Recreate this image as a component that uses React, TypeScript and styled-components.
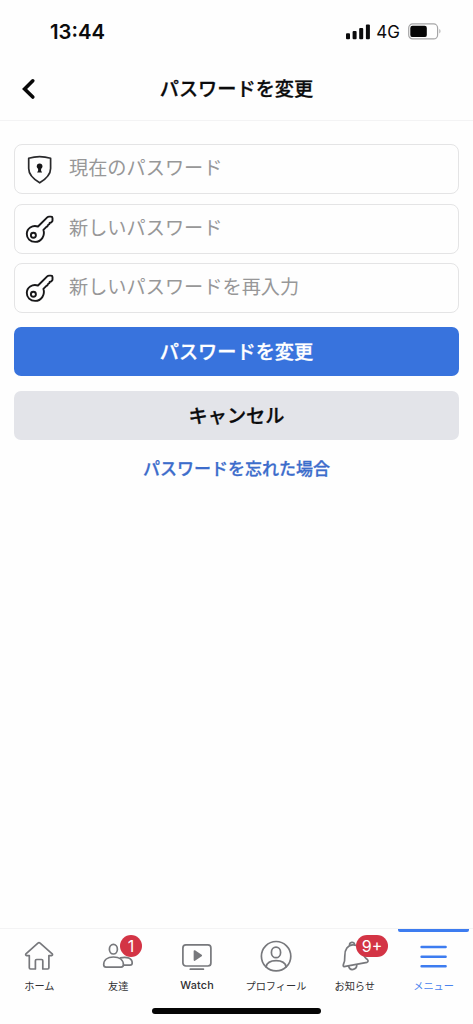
import React from 'react';
import styled, { createGlobalStyle } from 'styled-components';

const GlobalStyle = createGlobalStyle`
  * { box-sizing: border-box; }
  body {
    margin: 0;
    background: #fefefe;
    font-family: Inter, "Noto Sans CJK JP", sans-serif;
    color: #0b0b0c;
  }
`;

const Screen = styled.div`
  display: flex;
  flex-direction: column;
  width: 100%;
  height: 1024px;
  overflow: hidden;
`;

const StatusBar = styled.div`
  display: flex;
  align-items: center;
  justify-content: space-between;
  height: 56px;
  padding: 7px 31px 0 50px;
`;

const Clock = styled.div`
  font-size: 20.3px;
  font-weight: 600;
  line-height: 24px;
`;

const StatusIcons = styled.div`
  display: flex;
  align-items: center;
`;

const Network = styled.span`
  margin: 1px 8px 0 5.4px;
  font-size: 17px;
  line-height: 20px;
  font-weight: 400;
`;

const Header = styled.header`
  display: grid;
  grid-template-columns: 60px 1fr 60px;
  align-items: center;
  height: 65px;
  border-bottom: 1px solid #f3f3f4;
`;

const BackButton = styled.button`
  display: flex;
  padding: 1px 0 0 20px;
  border: 0;
  background: none;
`;

const Title = styled.h1`
  margin: 2px 0 0;
  text-align: center;
  font-size: 19.2px;
  font-weight: 500;
  line-height: 28px;
  -webkit-text-stroke: 0.3px currentColor;
`;

const Form = styled.main`
  flex: 1;
  display: flex;
  flex-direction: column;
  padding: 23px 14px 0;
`;

const Fields = styled.div`
  display: flex;
  flex-direction: column;
  gap: 9.3px;
  margin-bottom: 13.8px;
`;

const Field = styled.label`
  display: flex;
  align-items: center;
  height: 50.3px;
  padding-left: 9px;
  border: 1px solid #e4e4e5;
  border-radius: 8px;
`;

const Hint = styled.span`
  margin: -2px 0 0 13px;
  color: #979798;
  font-size: 19.2px;
  font-weight: 400;
  line-height: 28px;
`;

const Button = styled.button<{ $primary?: boolean }>`
  height: 49px;
  margin-bottom: 14.4px;
  padding: 1px 0 0;
  border: 0;
  border-radius: 7px;
  background: ${(p) => (p.$primary ? '#3873dd' : '#e3e4e9')};
  color: ${(p) => (p.$primary ? '#fff' : '#0b0b0c')};
  font-family: inherit;
  font-size: 19.2px;
  font-weight: 500;
  line-height: 28px;
  -webkit-text-stroke: 0.3px currentColor;
`;

const ForgotLink = styled.a`
  align-self: center;
  margin-top: 3px;
  color: #3c6ccb;
  font-size: 17px;
  font-weight: 500;
  line-height: 24px;
  -webkit-text-stroke: 0.3px currentColor;
`;

const TabBar = styled.nav`
  display: grid;
  grid-template-columns: repeat(6, 1fr);
  height: 72px;
  border-top: 1px solid #f3f3f4;
`;

const Tab = styled.div<{ $active?: boolean }>`
  position: relative;
  display: flex;
  flex-direction: column;
  align-items: center;
  padding-top: 9.4px;
  color: ${(p) => (p.$active ? '#3d7cf0' : '#77787c')};

  &::before {
    content: '';
    display: ${(p) => (p.$active ? 'block' : 'none')};
    position: absolute;
    top: 0;
    left: 4px;
    width: 71px;
    height: 3px;
    border-radius: 0 0 2px 2px;
    background: #3d7cf0;
  }
`;

const TabLabel = styled.span<{ $active?: boolean; $latin?: boolean }>`
  margin-top: 5.6px;
  color: ${(p) => (p.$active ? '#4a84ee' : '#303033')};
  font-size: ${(p) => (p.$latin ? '10.8px' : '10.2px')};
  font-weight: ${(p) => (p.$latin ? 500 : 400)};
  letter-spacing: ${(p) => (p.$latin ? '0.15px' : 'normal')};
  line-height: 16px;
  white-space: nowrap;
`;

const Badge = styled.span<{ $wide?: boolean }>`
  position: absolute;
  top: 6px;
  left: ${(p) => (p.$wide ? '41px' : '41.2px')};
  width: ${(p) => (p.$wide ? '31.5px' : '22px')};
  height: 22px;
  border-radius: 11px;
  background: #d33445;
  color: #fff;
  text-align: center;
  font-size: 16px;
  line-height: 22px;
`;

const HomeArea = styled.div`
  display: flex;
  justify-content: center;
  height: 24px;
  padding-top: 8px;
`;

const HomeIndicator = styled.div`
  width: 169px;
  height: 6px;
  border-radius: 3px;
  background: #050505;
`;

const SignalIcon = () => (
  <svg width="25" height="16" viewBox="0 0 25 16" fill="#0b0b0c">
    <rect x="0" y="9.3" width="4" height="6" rx="1" />
    <rect x="6.6" y="7" width="4" height="8.3" rx="1" />
    <rect x="13.2" y="4" width="4" height="11.3" rx="1" />
    <rect x="19.9" y="0.5" width="4" height="14.8" rx="1" />
  </svg>
);

const BatteryIcon = () => (
  <svg width="34" height="17" viewBox="0 0 34 17" fill="none">
    <rect x="0.7" y="0.9" width="28.9" height="15" rx="4" stroke="#a5a5a6" strokeWidth="1.2" />
    <rect x="2.3" y="2.7" width="16.5" height="11.4" rx="2.2" fill="#050505" />
    <path d="M31.4 6v4.4c1.4-.6 1.4-3.8 0-4.4z" fill="#a5a5a6" />
  </svg>
);

const BackIcon = () => (
  <svg width="18" height="22" viewBox="0 0 18 22" fill="none">
    <path d="M12.8 2.8 4.6 11l8.2 8" stroke="#080808" strokeWidth="3.6" strokeLinecap="round" strokeLinejoin="miter" />
  </svg>
);

const ShieldIcon = () => (
  <svg width="32" height="32" viewBox="0 0 32 32" fill="none" stroke="#29292b" strokeWidth="1.7" strokeLinejoin="round">
    <path d="M4.7 5.2C12 3.1 19.3 3.1 26.6 5.2V15.5C26.6 22.4 21 26.6 15.7 29.8 10.3 26.6 4.7 22.4 4.7 15.5Z" />
    <circle cx="15.6" cy="13.2" r="2.8" fill="#171719" stroke="none" />
    <path d="M14.1 14.5h3v3.2l1 1.9h-5l1-1.9z" fill="#171719" stroke="none" />
  </svg>
);

const KeyIcon = () => (
  <svg width="32" height="32" viewBox="0 0 32 32" fill="none" stroke="#171719" strokeWidth="1.9" strokeLinejoin="round">
    <path d="M14 13.5 23.2 4.4Q24 3.6 25 3.6H27.1Q28.5 3.6 28.5 5V7.5Q28.5 8.1 28 8.6L27.3 9.3Q26.8 9.8 26 9.7 25.5 9.7 25.5 10.4 25.6 11.4 24.6 11.6 23.8 11.8 23.7 12.7 23.5 13.6 22.4 13.8L19.4 16.8C21.3 22.8 17.3 28.9 11.1 28.9 6.2 28.9 2.8 25.3 2.8 20.9 2.8 15.4 8.2 11.7 14 13.5Z" />
    <circle cx="9.4" cy="22.2" r="2.5" />
  </svg>
);

const TabIcon = styled.svg.attrs({
  width: 34,
  height: 34,
  viewBox: '0 0 34 34',
  fill: 'none',
  stroke: 'currentColor',
  strokeLinecap: 'round',
  strokeLinejoin: 'round',
})<{ $weight?: number }>`
  flex: none;
  stroke-width: ${(p) => p.$weight ?? 1.7};
`;

const HomeIcon = () => (
  <TabIcon>
    <path d="M15.9 5.1Q17 4.2 18.1 5.1L30.2 15.8Q31.1 17.3 29.5 17.6H26.9V29.8Q26.9 31 25.7 31H20.8V22.7Q20.8 21.5 19.6 21.5H14.6Q13.4 21.5 13.4 22.7V31H8.5Q7.3 31 7.3 29.8V17.6H4.7Q3.1 17.3 3.9 15.8Z" />
  </TabIcon>
);

const FriendsIcon = () => (
  <TabIcon>
    <ellipse cx="12.4" cy="11.2" rx="4" ry="4.8" />
    <path d="M5 29.1Q2.7 29.1 2.7 26.8C2.7 22 6.4 19 12.4 19S22.4 22 22.4 26.8Q22.4 29.1 20.1 29.1Z" />
    <path d="M19.4 19.9C25.9 18.3 31.2 20.3 31.2 25Q31.2 27.2 29 27.2H22.7" />
  </TabIcon>
);

const WatchIcon = () => (
  <TabIcon>
    <rect x="2.9" y="6.9" width="28" height="21.1" rx="3" />
    <path d="m14.5 13 6.7 4.5-6.7 4.5z" fill="currentColor" />
    <path d="M10.3 31.2H23.4" />
  </TabIcon>
);

const ProfileIcon = () => (
  <TabIcon>
    <circle cx="17.1" cy="18.2" r="14.7" />
    <ellipse cx="17" cy="14.4" rx="4.6" ry="5.3" />
    <path d="M7.1 28.9C7.9 24.6 11.5 22.7 17.1 22.7S26.3 24.6 27.1 28.9" />
  </TabIcon>
);

const BellIcon = () => (
  <TabIcon>
    <path d="M11.6 7.3C11.2 3.8 16.3 3.2 16.6 6.5" />
    <path d="M6.1 28.7Q4.8 28.3 5.4 26.5C6.6 24.2 7 22.6 6.8 18C6.5 11.4 10 7.2 14.8 6.8 20.3 6.5 22.3 10.6 24.3 14.8 26.4 18.7 27.6 20.3 29.4 21.5Q30.9 23.3 29 24.3Z" />
    <path d="M10.7 28.5C12 33.3 18.8 32 18.8 26.8" />
  </TabIcon>
);

const MenuIcon = () => (
  <TabIcon $weight={2.5}>
    <path d="M4.6 9H28.6M4.6 18.7H28.6M4.6 28.3H28.6" />
  </TabIcon>
);

type TabItem = {
  label: string;
  icon: React.ReactNode;
  badge?: string;
  active?: boolean;
  latin?: boolean;
};

const tabs: TabItem[] = [
  { label: 'ホーム', icon: <HomeIcon /> },
  { label: '友達', icon: <FriendsIcon />, badge: '1' },
  { label: 'Watch', icon: <WatchIcon />, latin: true },
  { label: 'プロフィール', icon: <ProfileIcon /> },
  { label: 'お知らせ', icon: <BellIcon />, badge: '9+' },
  { label: 'メニュー', icon: <MenuIcon />, active: true },
];

export default function App() {
  return (
    <>
      <GlobalStyle />
      <Screen>
        <StatusBar>
          <Clock>13:44</Clock>
          <StatusIcons>
            <SignalIcon />
            <Network>4G</Network>
            <BatteryIcon />
          </StatusIcons>
        </StatusBar>
        <Header>
          <BackButton aria-label="戻る">
            <BackIcon />
          </BackButton>
          <Title>パスワードを変更</Title>
        </Header>
        <Form>
          <Fields>
            <Field>
              <ShieldIcon />
              <Hint>現在のパスワード</Hint>
            </Field>
            <Field>
              <KeyIcon />
              <Hint>新しいパスワード</Hint>
            </Field>
            <Field>
              <KeyIcon />
              <Hint>新しいパスワードを再入力</Hint>
            </Field>
          </Fields>
          <Button $primary>パスワードを変更</Button>
          <Button>キャンセル</Button>
          <ForgotLink>パスワードを忘れた場合</ForgotLink>
        </Form>
        <TabBar>
          {tabs.map((tab) => (
            <Tab key={tab.label} $active={tab.active}>
              {tab.icon}
              <TabLabel $active={tab.active} $latin={tab.latin}>
                {tab.label}
              </TabLabel>
              {tab.badge && <Badge $wide={tab.badge.length > 1}>{tab.badge}</Badge>}
            </Tab>
          ))}
        </TabBar>
        <HomeArea>
          <HomeIndicator />
        </HomeArea>
      </Screen>
    </>
  );
}
